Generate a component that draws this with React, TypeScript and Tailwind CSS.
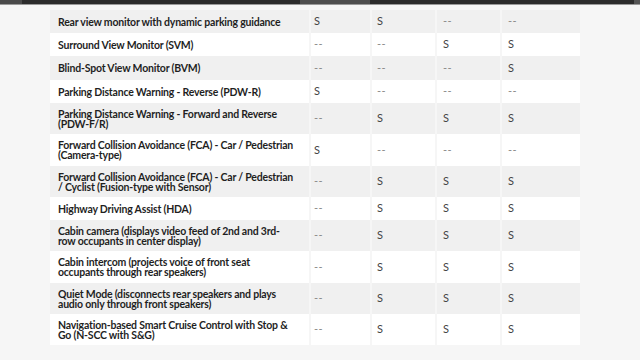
import React from "react";

type Row = { label: string; v: string[]; h: string; grey: boolean };

const rows: Row[] = [
  { label: "Rear view monitor with dynamic parking guidance", v: ["S", "S", "--", "--"], h: "h-[23px]", grey: true },
  { label: "Surround View Monitor (SVM)", v: ["--", "--", "S", "S"], h: "h-[23px]", grey: false },
  { label: "Blind-Spot View Monitor (BVM)", v: ["--", "--", "--", "S"], h: "h-[24px]", grey: true },
  { label: "Parking Distance Warning - Reverse (PDW-R)", v: ["S", "--", "--", "--"], h: "h-[23px]", grey: false },
  { label: "Parking Distance Warning - Forward and Reverse (PDW-F/R)", v: ["--", "S", "S", "S"], h: "h-[31px]", grey: true },
  { label: "Forward Collision Avoidance (FCA) - Car / Pedestrian (Camera-type)", v: ["S", "--", "--", "--"], h: "h-[32px]", grey: false },
  { label: "Forward Collision Avoidance (FCA) - Car / Pedestrian / Cyclist (Fusion-type with Sensor)", v: ["--", "S", "S", "S"], h: "h-[31px]", grey: true },
  { label: "Highway Driving Assist (HDA)", v: ["--", "S", "S", "S"], h: "h-[23px]", grey: false },
  { label: "Cabin camera (displays video feed of 2nd and 3rd-row occupants in center display)", v: ["--", "S", "S", "S"], h: "h-[31px]", grey: true },
  { label: "Cabin intercom (projects voice of front seat occupants through rear speakers)", v: ["--", "S", "S", "S"], h: "h-[32px]", grey: false },
  { label: "Quiet Mode (disconnects rear speakers and plays audio only through front speakers)", v: ["--", "S", "S", "S"], h: "h-[31px]", grey: true },
  { label: "Navigation-based Smart Cruise Control with Stop & Go (N-SCC with S&G)", v: ["--", "S", "S", "S"], h: "h-[31px]", grey: false },
];

const valueCols = ["w-[59px] pl-[3px]", "w-[63px] pl-[5px]", "w-[63px] pl-[6px]", "w-[78px] pl-[6px]"];

export default function App() {
  return (
    <div className="w-[640px] h-[360px] overflow-hidden bg-[#f6f6f6] font-['Lato',sans-serif]">
      <div className="flex h-[5px] bg-[#2c2c2c] border-b border-[#9a9a9a]">
        <div className="w-[22px] bg-[#4a4a4a]" />
        <div className="w-[278px]" />
        <div className="w-[70px] bg-[#4f4f4f]" />
        <div className="flex-1" />
        <div className="w-[6px] bg-[#555]" />
      </div>
      <div className="ml-[50px] mt-[5px] flex w-[530px] flex-col">
        {rows.map((r, i) => (
          <div key={i} className={`flex gap-[2px] ${r.h}`}>
            <div
              className={`flex w-[259px] items-center pl-[8px] pr-[13px] text-[10.5px] leading-[10px] tracking-[-0.2px] font-bold text-[#1f1f1f] ${
                r.grey ? "bg-[#f0f0f0]" : "bg-white"
              }`}
            >
              {r.label}
            </div>
            {r.v.map((v, j) => (
              <div
                key={j}
                className={`flex items-center text-[11px] ${valueCols[j]} ${
                  v === "S" ? "text-[#444]" : "text-[#888] tracking-[0.5px]"
                } ${r.grey ? "bg-[#f0f0f0]" : "bg-white"}`}
              >
                {v}
              </div>
            ))}
          </div>
        ))}
      </div>
    </div>
  );
}
